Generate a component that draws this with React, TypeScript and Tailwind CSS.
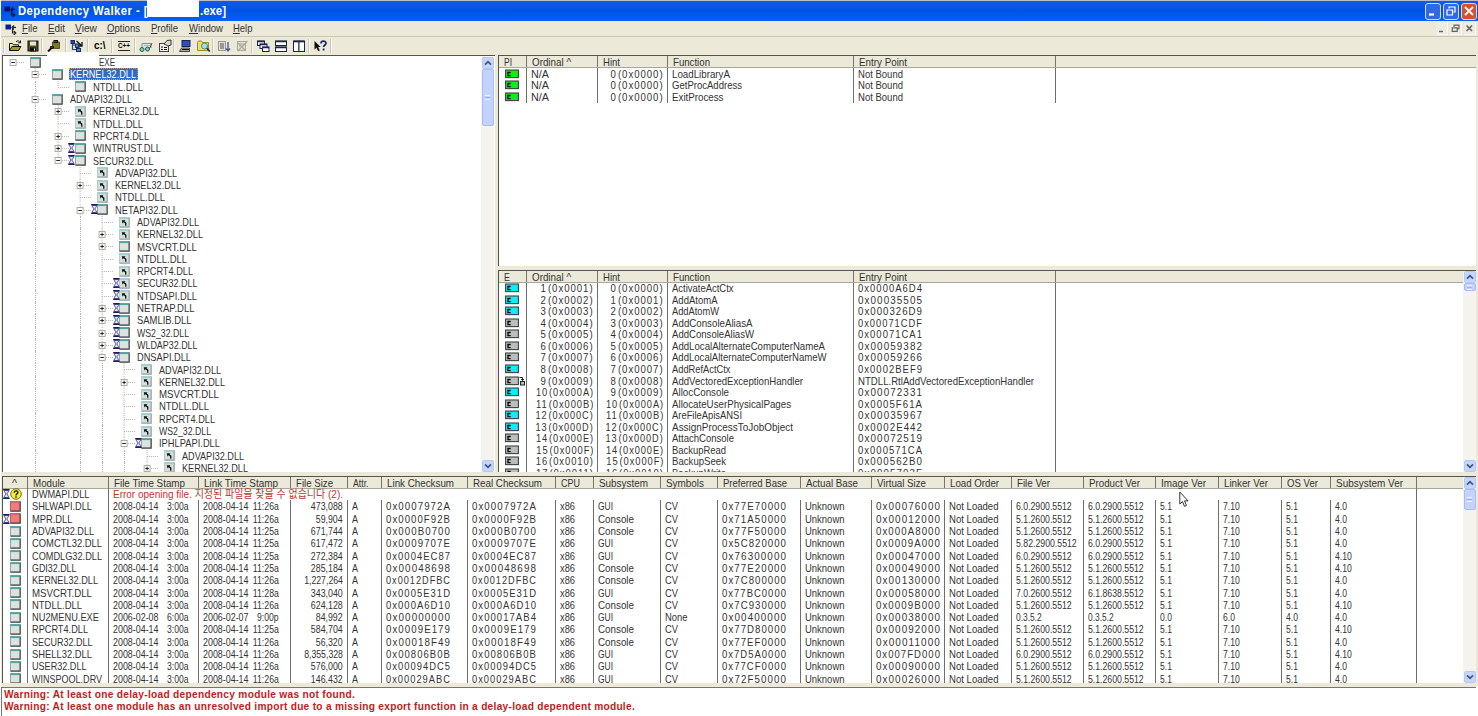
import { useLayoutEffect, useRef } from "react";
import type { ReactNode } from "react";

/* Text squeezed or stretched to a given width, like a bitmap UI font. */
function Fit({ w, children, right = false, className = "" }: { w?: number; children: ReactNode; right?: boolean; className?: string }) {
  const ref = useRef<HTMLSpanElement>(null);
  useLayoutEffect(() => {
    const el = ref.current;
    if (!el || !w) return;
    el.style.transform = "none";
    el.style.transform = `scaleX(${w / el.getBoundingClientRect().width})`;
  }, [w, children]);
  return (
    <span ref={ref} className={`inline-block shrink-0 whitespace-pre ${right ? "origin-right" : "origin-left"} ${className}`}>
      {children}
    </span>
  );
}

const NAME_W: Record<string, number> = {
  "KERNEL32.DLL": 66, "NTDLL.DLL": 50, "ADVAPI32.DLL": 62, "RPCRT4.DLL": 56, "WINTRUST.DLL": 68,
  "SECUR32.DLL": 60.5, "NETAPI32.DLL": 63, "MSVCRT.DLL": 60, "NTDSAPI.DLL": 60, "NETRAP.DLL": 57.5,
  "SAMLIB.DLL": 54.5, "WS2_32.DLL": 52, "WLDAP32.DLL": 60.5, "DNSAPI.DLL": 54, "IPHLPAPI.DLL": 61,
  "DWMAPI.DLL": 57.5, "SHLWAPI.DLL": 60, "MPR.DLL": 40.5, "COMCTL32.DLL": 70, "COMDLG32.DLL": 70,
  "GDI32.DLL": 44.5, "NU2MENU.EXE": 67, "SHELL32.DLL": 60, "USER32.DLL": 54.5, "WINSPOOL.DRV": 70,
};

function ModuleIcon({ kind }: { kind: "box" | "arrow" | "red" }) {
  return (
    <svg width="11" height="11" viewBox="0 0 11 11" className="shrink-0">
      <rect x="0.5" y="0.5" width="9.5" height="9.5" fill={kind === "red" ? "#f07c7c" : kind === "arrow" ? "#d3e0de" : "#dde1e0"} stroke={kind === "red" ? "#b06060" : kind === "arrow" ? "#bcc9c7" : "#9aa5a3"} />
      <path d="M0.5 1.200h9" stroke={kind === "red" ? "#d86b6b" : kind === "arrow" ? "#a3d2cc" : "#45aaa0"} strokeWidth="1.800" />
      <path d="M10.2 0.5v9.7H0.5" fill="none" stroke={kind === "arrow" ? "#9aa8a6" : "#4a4f4e"} strokeWidth="1.2" />
      {kind === "arrow" && <path d="M2.8 3.200h3.600L5.600 4.200 7.400 5.800v3H6.100V6.600L4.600 5.300 3.500 6.400z" fill="#111" />}
    </svg>
  );
}

function Hourglass() {
  return (
    <svg width="7" height="10" viewBox="0 0 7 10" className="shrink-0">
      <path d="M0.2 0.8h6.4M0.2 9.2h6.4" stroke="#1b1b66" strokeWidth="1.5" />
      <path d="M1.2 1.5c0 2 1.6 2.4 1.6 3.5s-1.6 1.500-1.600 3.500h4.400c0-2-1.600-2.400-1.600-3.500s1.600-1.500 1.600-3.500z" fill="#dfe2f2" stroke="#23236e" strokeWidth="0.8" />
    </svg>
  );
}

type TreeRow = [number, string, "box" | "arrow", boolean, string];
const tree: TreeRow[] = [
  [0, "-", "box", false, "EXE"],
  [1, "-", "box", false, "KERNEL32.DLL"],
  [2, "", "box", false, "NTDLL.DLL"],
  [1, "-", "box", false, "ADVAPI32.DLL"],
  [2, "+", "arrow", false, "KERNEL32.DLL"],
  [2, "", "arrow", false, "NTDLL.DLL"],
  [2, "+", "box", false, "RPCRT4.DLL"],
  [2, "+", "box", true, "WINTRUST.DLL"],
  [2, "-", "box", true, "SECUR32.DLL"],
  [3, "", "arrow", false, "ADVAPI32.DLL"],
  [3, "+", "arrow", false, "KERNEL32.DLL"],
  [3, "", "arrow", false, "NTDLL.DLL"],
  [3, "-", "box", true, "NETAPI32.DLL"],
  [4, "", "arrow", false, "ADVAPI32.DLL"],
  [4, "+", "arrow", false, "KERNEL32.DLL"],
  [4, "+", "box", false, "MSVCRT.DLL"],
  [4, "", "arrow", false, "NTDLL.DLL"],
  [4, "", "arrow", false, "RPCRT4.DLL"],
  [4, "", "arrow", true, "SECUR32.DLL"],
  [4, "", "arrow", true, "NTDSAPI.DLL"],
  [4, "+", "box", true, "NETRAP.DLL"],
  [4, "+", "box", true, "SAMLIB.DLL"],
  [4, "+", "box", true, "WS2_32.DLL"],
  [4, "+", "box", true, "WLDAP32.DLL"],
  [4, "-", "box", true, "DNSAPI.DLL"],
  [5, "", "arrow", false, "ADVAPI32.DLL"],
  [5, "+", "arrow", false, "KERNEL32.DLL"],
  [5, "", "arrow", false, "MSVCRT.DLL"],
  [5, "", "arrow", false, "NTDLL.DLL"],
  [5, "", "arrow", false, "RPCRT4.DLL"],
  [5, "", "arrow", false, "WS2_32.DLL"],
  [5, "-", "box", true, "IPHLPAPI.DLL"],
  [6, "", "arrow", false, "ADVAPI32.DLL"],
  [6, "+", "arrow", false, "KERNEL32.DLL"],
];

function continues(i: number, level: number) {
  for (let j = i + 1; j < tree.length; j++) {
    if (tree[j][0] < level) return false;
    if (tree[j][0] === level) return true;
  }
  return level !== 0 && level !== 2;
}

function TreeLine({ i }: { i: number }) {
  const [level, exp, icon, glass, name] = tree[i];
  return (
    <div className="flex h-[12.31px] items-center">
      {Array.from({ length: level }, (_, l) => (
        <div key={l} className="flex h-full w-[22.25px] shrink-0 justify-center">
          {continues(i, l) && <div className="h-full border-l border-dotted border-[#b4b4ac]" />}
        </div>
      ))}
      <svg width="22.25" height="12.31" viewBox="0 0 22.25 12.31" className="shrink-0">
        <g stroke="#b4b4ac" strokeDasharray="1 1">
          {level > 0 && <path d="M11.1 0V6.500" />}
          {continues(i, level) && <path d="M11.1 6.500V12.310" />}
          <path d="M11.1 6.500H22.250" />
        </g>
        {exp && (
          <>
            <rect x="8.1" y="3.5" width="6" height="6" fill="#fff" stroke="#a5a59c" strokeWidth="0.9" />
            <path d={exp === "+" ? "M9.300 6.500h3.600M11.100 4.700v3.600" : "M9.300 6.500h3.600"} stroke="#222" strokeWidth="1" />
          </>
        )}
      </svg>
      <div className="relative flex w-[22.25px] shrink-0 justify-center">
        {glass && <div className="absolute left-[-0.500px] top-0"><Hourglass /></div>}
        <ModuleIcon kind={icon} />
      </div>
      {i === 0 ? (
        <div className="pl-[52px]"><Fit w={16}>EXE</Fit></div>
      ) : i === 1 ? (
        <div className="flex h-[12px] w-[69px] items-center bg-[#316ac5] text-white outline outline-1 -outline-offset-1 outline-dotted outline-[#c9a060]">
          <Fit w={66} className="ml-[1.500px]">{name}</Fit>
        </div>
      ) : (
        <div className="pl-[1.500px]"><Fit w={NAME_W[name]}>{name}</Fit></div>
      )}
    </div>
  );
}

function Arrow({ up = false }: { up?: boolean }) {
  return (
    <div className="flex h-[12px] w-[12px] shrink-0 items-center justify-center rounded-[2px] border border-[#b4c8f6] bg-[#c6d5fc]">
      <svg width="8" height="6" viewBox="0 0 8 6">
        <path d={up ? "M1 4.700L4 1.700L7 4.700" : "M1 1.300L4 4.300L7 1.300"} fill="none" stroke="#40577f" strokeWidth="1.800" />
      </svg>
    </div>
  );
}

function ScrollBar({ thumb }: { thumb: string }) {
  return (
    <div className="flex w-[13px] shrink-0 flex-col items-center bg-[#f4f3ee]">
      <Arrow up />
      <div className={`flex w-[12px] flex-col items-center justify-center gap-px rounded-[2px] border border-[#a9bdf0] bg-[#c3d3fb] ${thumb}`}>
        <div className="h-px w-[5px] bg-[#eef4fe]" />
        <div className="h-px w-[5px] bg-[#9db4ea]" />
        <div className="h-px w-[5px] bg-[#eef4fe]" />
      </div>
      <div className="grow" />
      <Arrow />
    </div>
  );
}

function HeadCell({ width, label, w, center = false }: { width: string; label: string; w: number; center?: boolean }) {
  return (
    <div className={`flex h-full shrink-0 items-center border-r border-[#77756a] ${center ? "justify-center" : "pl-[5px]"} ${width}`}>
      <Fit w={w}>{label}</Fit>
    </div>
  );
}

const listCols: [string, string, number][] = [
  ["w-[71px]", "Ordinal ^", 39],
  ["w-[70px]", "Hint", 17],
  ["w-[186px]", "Function", 37],
  ["w-[202px]", "Entry Point", 48],
];

function ListHead({ first, w }: { first: string; w: number }) {
  return (
    <div className="flex h-[12px] shrink-0 border-b border-[#a9a798] bg-[#ebe9d9]">
      <HeadCell width="w-[28px]" label={first} w={w} />
      {listCols.map(([c, l, n]) => <HeadCell key={l} width={c} label={l} w={n} />)}
    </div>
  );
}

function CIcon({ color, forward = false }: { color: string; forward?: boolean }) {
  return (
    <svg width="21" height="10" viewBox="0 0 21 10" className="shrink-0">
      <rect x="0.6" y="1" width="12.800" height="7.600" fill={color} stroke="#3b4444" strokeWidth="1.100" />
      <path d="M5.700 3.500H3v3.200h2.700" fill="none" stroke="#000" strokeWidth="1.300" />
      {forward && (
        <g fill="none" stroke="#222">
          <path d="M14.500 1.500h3v2.800M16.200 3l1.300 1.600L19 3" />
          <rect x="15.500" y="5.500" width="4" height="3.500" fill="#9bd0c8" />
        </g>
      )}
    </svg>
  );
}

const LINE = "border-r border-[#6e6e6e]";

function ListRow({ color, forward, ordinal, hint, fn, fw, entry, ew, tracked }: {
  color: string; forward?: boolean; ordinal: string; hint: string; fn: string; fw: number; entry: string; ew: number; tracked: boolean;
}) {
  return (
    <div className="flex h-[11.540px] shrink-0 items-center">
      <div className={`flex h-full w-[28px] shrink-0 items-center pl-[5.500px] ${LINE}`}><CIcon color={color} forward={forward} /></div>
      <div className={`flex h-full w-[71px] shrink-0 items-center ${LINE} ${tracked ? "justify-end pr-[3px]" : "pl-[4px]"}`}>
        <Fit w={tracked ? ordinal.length * 5.1 + 2 : 18} right={tracked} className={tracked ? "tracking-[1.100px] [word-spacing:-3px]" : ""}>{ordinal}</Fit>
      </div>
      <div className={`flex h-full w-[70px] shrink-0 items-center justify-end pr-[3px] ${LINE}`}>
        <Fit w={hint.length * 5.1 + 2} right className="tracking-[1.100px] [word-spacing:-3px]">{hint}</Fit>
      </div>
      <div className={`flex h-full w-[186px] shrink-0 items-center pl-[4px] ${LINE}`}><Fit w={fw}>{fn}</Fit></div>
      <div className={`flex h-full w-[202px] shrink-0 items-center pl-[4px] ${LINE}`}>
        <Fit w={ew} className={entry.startsWith("0x") ? "tracking-[1.200px]" : ""}>{entry}</Fit>
      </div>
    </div>
  );
}

const imports: [string, number][] = [["LoadLibraryA", 58], ["GetProcAddress", 70], ["ExitProcess", 51.5]];

const exportsList: [string, number, string, string?][] = [
  ["ActivateActCtx", 61.5, "0x0000A6D4", "c"],
  ["AddAtomA", 45.5, "0x00035505", "c"],
  ["AddAtomW", 47, "0x000326D9", "c"],
  ["AddConsoleAliasA", 80.5, "0x00071CDF"],
  ["AddConsoleAliasW", 82, "0x00071CA1"],
  ["AddLocalAlternateComputerNameA", 153, "0x00059382"],
  ["AddLocalAlternateComputerNameW", 154.5, "0x00059266"],
  ["AddRefActCtx", 58.5, "0x0002BEF9", "c"],
  ["AddVectoredExceptionHandler", 131, "NTDLL.RtlAddVectoredExceptionHandler"],
  ["AllocConsole", 57, "0x00072331", "c"],
  ["AllocateUserPhysicalPages", 119, "0x0005F61A"],
  ["AreFileApisANSI", 70, "0x00035967", "c"],
  ["AssignProcessToJobObject", 121, "0x0002E442", "c"],
  ["AttachConsole", 62, "0x00072519"],
  ["BackupRead", 54, "0x000571CA"],
  ["BackupSeek", 54, "0x000562B0"],
  ["BackupWrite", 54, "0x0005703F"],
];

const hex4 = (n: number) => `(0x${n.toString(16).toUpperCase().padStart(4, "0")})`;

const moduleCols: [string, string, number][] = [
  ["w-[25px]", "^", 5],
  ["w-[81px]", "Module", 32],
  ["w-[90px]", "File Time Stamp", 71],
  ["w-[92px]", "Link Time Stamp", 74],
  ["w-[57px]", "File Size", 37],
  ["w-[34px]", "Attr.", 15.5],
  ["w-[86px]", "Link Checksum", 67],
  ["w-[88px]", "Real Checksum", 69],
  ["w-[38px]", "CPU", 19],
  ["w-[67px]", "Subsystem", 49],
  ["w-[57px]", "Symbols", 38],
  ["w-[83px]", "Preferred Base", 64],
  ["w-[71px]", "Actual Base", 52],
  ["w-[73px]", "Virtual Size", 49],
  ["w-[67px]", "Load Order", 49],
  ["w-[72px]", "File Ver", 33],
  ["w-[72px]", "Product Ver", 51],
  ["w-[63px]", "Image Ver", 45],
  ["w-[63px]", "Linker Ver", 44],
  ["w-[49px]", "OS Ver", 31],
  ["w-[86px]", "Subsystem Ver", 67],
];

/* name, icon, file date, file time, link date, link time, size, link sum, real sum, subsystem, symbols, base, virtual size, file ver, product ver, image, linker, os, subsystem ver */
const A = "2008-04-14";
const modules: string[][] = [
  ["SHLWAPI.DLL", "red", A, "3:00a", A, "11:26a", "473,088", "0x0007972A", "0x0007972A", "GUI", "CV", "0x77E70000", "0x00076000", "6.0.2900.5512", "6.0.2900.5512", "5.1", "7.10", "5.1", "4.0"],
  ["MPR.DLL", "redglass", A, "3:00a", A, "11:26a", "59,904", "0x0000F92B", "0x0000F92B", "Console", "CV", "0x71A50000", "0x00012000", "5.1.2600.5512", "5.1.2600.5512", "5.1", "7.10", "5.1", "4.0"],
  ["ADVAPI32.DLL", "", A, "3:00a", A, "11:25a", "671,744", "0x000B0700", "0x000B0700", "Console", "CV", "0x77F50000", "0x000A8000", "5.1.2600.5512", "5.1.2600.5512", "5.1", "7.10", "5.1", "4.0"],
  ["COMCTL32.DLL", "", A, "3:00a", A, "11:25a", "617,472", "0x0009707E", "0x0009707E", "GUI", "CV", "0x5C820000", "0x0009A000", "5.82.2900.5512", "6.0.2900.5512", "5.1", "7.10", "5.1", "4.0"],
  ["COMDLG32.DLL", "", A, "3:00a", A, "11:25a", "272,384", "0x0004EC87", "0x0004EC87", "GUI", "CV", "0x76300000", "0x00047000", "6.0.2900.5512", "6.0.2900.5512", "5.1", "7.10", "5.1", "4.10"],
  ["GDI32.DLL", "", A, "3:00a", A, "11:25a", "285,184", "0x00048698", "0x00048698", "Console", "CV", "0x77E20000", "0x00049000", "5.1.2600.5512", "5.1.2600.5512", "5.1", "7.10", "5.1", "4.10"],
  ["KERNEL32.DLL", "", A, "3:00a", A, "11:26a", "1,227,264", "0x0012DFBC", "0x0012DFBC", "Console", "CV", "0x7C800000", "0x00130000", "5.1.2600.5512", "5.1.2600.5512", "5.1", "7.10", "5.1", "4.0"],
  ["MSVCRT.DLL", "", A, "3:00a", A, "11:28a", "343,040", "0x0005E31D", "0x0005E31D", "GUI", "CV", "0x77BC0000", "0x00058000", "7.0.2600.5512", "6.1.8638.5512", "5.1", "7.10", "5.1", "4.0"],
  ["NTDLL.DLL", "", A, "3:00a", A, "11:26a", "624,128", "0x000A6D10", "0x000A6D10", "Console", "CV", "0x7C930000", "0x0009B000", "5.1.2600.5512", "5.1.2600.5512", "5.1", "7.10", "5.1", "4.10"],
  ["NU2MENU.EXE", "", "2006-02-08", "6:00a", "2006-02-07", "9:00p", "84,992", "0x00000000", "0x00017AB4", "GUI", "None", "0x00400000", "0x00038000", "0.3.5.2", "0.3.5.2", "0.0", "6.0", "4.0", "4.0"],
  ["RPCRT4.DLL", "", A, "3:00a", A, "11:25a", "584,704", "0x0009E179", "0x0009E179", "Console", "CV", "0x77D80000", "0x00092000", "5.1.2600.5512", "5.1.2600.5512", "5.1", "7.10", "5.1", "4.10"],
  ["SECUR32.DLL", "", A, "3:00a", A, "11:26a", "56,320", "0x00018F49", "0x00018F49", "Console", "CV", "0x77EF0000", "0x00011000", "5.1.2600.5512", "5.1.2600.5512", "5.1", "7.10", "5.1", "4.0"],
  ["SHELL32.DLL", "", A, "3:00a", A, "11:26a", "8,355,328", "0x00806B0B", "0x00806B0B", "GUI", "CV", "0x7D5A0000", "0x007FD000", "6.0.2900.5512", "6.0.2900.5512", "5.1", "7.10", "5.1", "4.10"],
  ["USER32.DLL", "", A, "3:00a", A, "11:26a", "576,000", "0x00094DC5", "0x00094DC5", "GUI", "CV", "0x77CF0000", "0x00090000", "5.1.2600.5512", "5.1.2600.5512", "5.1", "7.10", "5.1", "4.0"],
  ["WINSPOOL.DRV", "", A, "3:00a", A, "11:26a", "146,432", "0x00029ABC", "0x00029ABC", "GUI", "CV", "0x72F50000", "0x00026000", "5.1.2600.5512", "5.1.2600.5512", "5.1", "7.10", "5.1", "4.0"],
];

const WORD_W: Record<string, number> = { GUI: 15, Console: 36, CV: 13, None: 22.5, Unknown: 39.5, "Not Loaded": 49.5, x86: 15, A: 6 };

function textWidth(s: string) {
  if (WORD_W[s]) return WORD_W[s];
  if (s.startsWith("0x")) return 65;
  const digits = s.replace(/[.,]/g, "").length;
  return digits * 5 + (s.length - digits) * 1.9;
}

function DateTime({ d, t }: { d: string; t: string }) {
  return (
    <div className="flex w-[75.500px] shrink-0">
      <div className="w-[46px] shrink-0"><Fit w={45.5}>{d}</Fit></div>
      <div className="flex min-w-0 grow basis-0 justify-end"><Fit w={t.length > 5 ? 26 : 21.5} right>{t}</Fit></div>
    </div>
  );
}

function ModuleRow({ m }: { m: string[] }) {
  const rest = ["A", m[7], m[8], "x86", m[9], m[10], m[11], "Unknown", m[12], "Not Loaded", ...m.slice(13)];
  return (
    <div className="flex h-[12.300px] shrink-0">
      <div className={`flex w-[25px] shrink-0 items-center justify-end pr-[6px] ${LINE}`}>
        {m[1] === "redglass" && <Hourglass />}
        <ModuleIcon kind={m[1] ? "red" : "box"} />
      </div>
      <div className={`flex w-[81px] shrink-0 items-center pl-[4px] ${LINE}`}><Fit w={NAME_W[m[0]]}>{m[0]}</Fit></div>
      <div className={`flex w-[90px] shrink-0 items-center pl-[4px] ${LINE}`}><DateTime d={m[2]} t={m[3]} /></div>
      <div className={`flex w-[92px] shrink-0 items-center pl-[4px] ${LINE}`}><DateTime d={m[4]} t={m[5]} /></div>
      <div className={`flex w-[57px] shrink-0 items-center justify-end pr-[4px] ${LINE}`}><Fit w={textWidth(m[6])} right>{m[6]}</Fit></div>
      {rest.map((v, k) => (
        <div key={k} className={`flex shrink-0 items-center pl-[4px] ${LINE} ${moduleCols[k + 5][0]}`}>
          <Fit w={textWidth(v)} className={v.startsWith("0x") ? "tracking-[1.200px]" : ""}>{v}</Fit>
        </div>
      ))}
    </div>
  );
}

function AppIcon({ dark = false }: { dark?: boolean }) {
  return (
    <svg width="12" height="12" viewBox="0 0 12 12" className="shrink-0">
      <rect x="0.500" y="1.500" width="5.500" height="5" fill={dark ? "#0a1c96" : "#04107a"} />
      <g fill="none" stroke={dark ? "#222" : "#0a1440"} strokeWidth="1.200">
        <path d="M11 4.300H7.300M9 2.300L7 4.300l2 2M7.500 5v5h2M8.800 8l2 2-2 2" />
      </g>
    </svg>
  );
}

const menus: [string, string, number][] = [
  ["File", "w-[26px]", 15.5], ["Edit", "w-[27px]", 17], ["View", "w-[32px]", 22], ["Options", "w-[44px]", 33],
  ["Profile", "w-[38px]", 27], ["Window", "w-[44px]", 34], ["Help", "w-[30px]", 19.5],
];

function Tool({ width, children }: { width: string; children: ReactNode }) {
  return (
    <div className={`flex shrink-0 justify-center ${width}`}>
      <svg width="16" height="14" viewBox="0 0 16 14" fill="none" stroke="#111" strokeWidth="1">{children}</svg>
    </div>
  );
}

function Sep() {
  return <div className="h-[14px] w-[2px] shrink-0 border-l border-r border-l-[#cbc8b8] border-r-[#f8f7f0]" />;
}

function Toolbar() {
  return (
    <div className="flex h-[18px] shrink-0 items-center bg-[#ece9d8] pl-[2px]">
      <Sep />
      <Tool width="w-[20px]">
        <path d="M2.500 11.500v-7h3l1 1.300h5v2" fill="#f3ec8a" />
        <path d="M2.500 11.500l2.500-4h9l-2.500 4z" fill="#a59b28" />
        <path d="M9 2.800c1.500-1.500 3-1.300 4 .700M13.500 1.500v2.300h-2.300" />
      </Tool>
      <Tool width="w-[16px]">
        <rect x="3" y="2" width="10" height="10" fill="#4e4e20" />
        <rect x="5" y="2.500" width="6" height="4" fill="#e5e5dc" stroke="none" />
        <rect x="5.500" y="9" width="5" height="3" fill="#111" />
        <path d="M9.500 9.500v2" stroke="#fff" />
      </Tool>
      <Sep />
      <Tool width="w-[22px]">
        <path d="M6.500 3h7v6.500h-5L6.500 7.500z" fill="#7d7a26" stroke="#55521a" />
        <rect x="8" y="1.500" width="3.500" height="2" fill="#444" />
        <path d="M4.500 7.500h3v2h-3z" fill="#333" />
        <path d="M5 9.500l-3 3" strokeWidth="1.800" />
      </Tool>
      <Sep />
      <Tool width="w-[20px]">
        <path d="M3.500 2v8.500h4M3.500 6h4" stroke="#2a3f80" strokeWidth="1.200" />
        <rect x="2" y="1.500" width="3.500" height="3" fill="#2d4a94" stroke="#152a66" />
        <rect x="6.500" y="5" width="3.500" height="3.500" fill="#5b84b4" stroke="#152a66" />
        <rect x="7.500" y="9.500" width="4" height="3" fill="#5b84b4" stroke="#152a66" />
        <path d="M7.500 2l5 4.500M13 3v4H9.300" strokeWidth="1.300" />
      </Tool>
      <Sep />
      <div className="flex w-[22px] shrink-0 justify-center text-[10px] font-bold leading-none text-black"><Fit w={11.5} className="origin-center">c:\</Fit></div>
      <Sep />
      <div className="flex w-[21px] shrink-0 justify-center">
        <div className="flex h-[10px] w-[12px] items-center border-y border-[#222] text-[8px] font-bold leading-none text-black"><Fit w={12}>C++</Fit></div>
      </div>
      <Sep />
      <Tool width="w-[20px]">
        <path d="M4 9V4.500h9V9" stroke="#6e9a94" fill="#dce9e2" />
        <path d="M6 6.500h6" stroke="#9bb" />
        <circle cx="4" cy="10.500" r="2" fill="#8cc9b4" stroke="#285c50" />
        <circle cx="9.500" cy="10" r="2" fill="#8cc9b4" stroke="#285c50" />
        <path d="M11.500 9.500L14 4" stroke="#285c50" />
      </Tool>
      <Tool width="w-[17px]">
        <rect x="2.500" y="4.500" width="9" height="8" fill="#f3f2e8" stroke="#444" />
        <path d="M4 8h2M4 10.500h2M7 8.500h3M7 10.500h3" />
        <path d="M7 5l3-3.500 4-.500v5l-3 1z" fill="#d8d8cf" stroke="#333" />
      </Tool>
      <Sep />
      <Tool width="w-[20px]">
        <rect x="5" y="1.500" width="8" height="6" fill="#2f50b5" stroke="#1a235a" />
        <path d="M2.500 12.500l2-3.500h8v3.500z" fill="#aaa999" stroke="#444" />
        <path d="M5 10.500h7" />
      </Tool>
      <Tool width="w-[17px]">
        <path d="M1.500 11.500v-8l1-1.500h3l1 1.500h6v8z" fill="#f0df60" stroke="#9a8a2a" />
        <circle cx="8.500" cy="7" r="3" fill="#9fe0e8" stroke="#4a8a90" />
        <path d="M10.800 9.200l3 3.300" stroke="#303050" strokeWidth="1.800" />
      </Tool>
      <Sep />
      <Tool width="w-[19px]">
        <rect x="2.500" y="2.500" width="7" height="9" fill="#deddd2" stroke="#999" />
        <path d="M4 5h4M4 7h4M4 9h4" stroke="#555" />
        <path d="M12 3v9M10 9.500l2 2.500 2-2.500" stroke="#4a568c" strokeWidth="1.300" />
      </Tool>
      <Tool width="w-[18px]">
        <rect x="3.500" y="2.500" width="8" height="9" fill="#e4e2d6" stroke="#aaa99c" />
        <path d="M5 5h5M5 7h4M4 12l9.500-10M4 4l8 8" stroke="#aaa99c" strokeWidth="1.200" />
      </Tool>
      <Sep />
      <Tool width="w-[20px]">
        <g fill="#fff" stroke="#1b2350"><rect x="2.500" y="2" width="7" height="4.500" /><rect x="5" y="5" width="7" height="4.500" /><rect x="7.500" y="8" width="6.500" height="4.500" /></g>
        <path d="M2.500 2.500H9.500M5 5.500h7M7.500 8.500h6.500" stroke="#1b2350" strokeWidth="1.700" />
      </Tool>
      <Tool width="w-[16px]">
        <rect x="2.500" y="2" width="11" height="4.500" fill="#fff" stroke="#1b2350" /><rect x="2.500" y="8" width="11" height="4.500" fill="#fff" stroke="#1b2350" />
        <path d="M2.500 2.500h11M2.500 8.500h11" stroke="#1b2350" strokeWidth="1.700" />
      </Tool>
      <Tool width="w-[19px]">
        <rect x="2.500" y="2" width="5.500" height="10.500" fill="#fff" stroke="#1b2350" /><rect x="8" y="2" width="5.500" height="10.500" fill="#fff" stroke="#1b2350" />
        <path d="M2.500 2.500h11" stroke="#1b2350" strokeWidth="1.700" />
      </Tool>
      <Sep />
      <Tool width="w-[20px]">
        <path d="M2.500 2v8.500l2-1.800 1.700 3.600 1.600-.800L6.200 8h2.500z" fill="#111" stroke="none" />
        <path d="M9 4.500c0-3 5-3 5-.300 0 1.800-2.400 1.700-2.400 3.800M11.600 9.500v2" stroke="#1b2b70" strokeWidth="1.800" />
      </Tool>
      <Sep />
    </div>
  );
}

export default function App() {
  return (
    <div className="relative flex h-[716px] w-[1478px] select-none flex-col overflow-hidden bg-white pl-px font-['Liberation_Sans','Noto_Sans_CJK_KR',sans-serif] text-[11px] leading-[12px] text-[#333]">
      <div className="flex h-[21px] shrink-0 items-center border-t border-[#b9bcc4] bg-linear-to-b from-[#0a5cf0] via-[#0054e3] to-[#0360f5] pl-[3px] pr-[1px]">
        <AppIcon />
        <div className="-mt-px flex w-[184px] shrink-0 pl-[2px] text-[12px] font-bold text-white"><Fit w={130} className="tracking-[0.500px]">Dependency Walker - [</Fit></div>
        <Fit w={26} className="-mt-px text-[12px] font-bold text-white">.exe]</Fit>
        <div className="grow" />
        <div className="flex gap-[2px]">
          {["min", "restore", "close"].map((b) => (
            <div key={b} className={`flex h-[17px] w-[16px] items-center justify-center rounded-[3px] border border-[#cfdcf8] ${b === "close" ? "bg-[#d8502f]" : "bg-[#3468e0]"}`}>
              <svg width="12" height="12" viewBox="0 0 12 12" fill="none" stroke="#fff" strokeWidth="1.800">
                {b === "min" && <path d="M2 9.500h5" strokeWidth="2.200" />}
                {b === "restore" && <path d="M4 3.500V2h6v5H8.500M2 5h5.500v5H2z" strokeWidth="1.200" />}
                {b === "close" && <path d="M2 2l8 8M10 2l-8 8" />}
              </svg>
            </div>
          ))}
        </div>
      </div>

      <div className="flex h-[16px] shrink-0 items-center border-b border-[#c9c6b6] bg-[#ece9d8] pl-[4px] pr-[2px]">
        <AppIcon dark />
        <div className="-mt-px flex pl-[5px]">
          {menus.map(([m, c, w]) => (
            <div key={m} className={c}><Fit w={w}><span className="underline underline-offset-1">{m[0]}</span>{m.slice(1)}</Fit></div>
          ))}
        </div>
        <div className="grow" />
        <div className="flex gap-[2px]">
          {["min", "restore", "close"].map((b) => (
            <div key={b} className="flex h-[13px] w-[12px] items-center justify-center border-b border-r border-[#f8f7f2] bg-[#efede2]">
              <svg width="9" height="9" viewBox="0 0 9 9" fill="none" stroke="#66665e" strokeWidth="1.400">
                {b === "min" && <path d="M2 7.500h4" />}
                {b === "restore" && <path d="M3 3V1.200h5v3.500H6.500M1.200 3.800h5v3.500h-5z" strokeWidth="1.200" />}
                {b === "close" && <path d="M1.500 1.500l5.500 5.500M7 1.500L1.500 7" strokeWidth="1.700" />}
              </svg>
            </div>
          ))}
        </div>
      </div>

      <Toolbar />

      <div className="flex h-[417px] shrink-0 bg-[#ece9d8] pl-px pr-[2px]">
        <div className="flex w-[493px] shrink-0 overflow-hidden border-l border-t border-[#55534a] bg-white">
          <div className="-ml-[0.800px] flex grow flex-col">
            {tree.map((_, i) => <TreeLine key={i} i={i} />)}
          </div>
          <div className="flex pr-px pt-px"><ScrollBar thumb="h-[57px]" /></div>
        </div>
        <div className="w-[3px] shrink-0" />
        <div className="flex grow flex-col">
          <div className="flex h-[211px] shrink-0 flex-col overflow-hidden border-l border-t border-[#55534a] bg-white">
            <ListHead first="PI" w={8} />
            {imports.map(([fn, fw]) => (
              <ListRow key={fn} color="#12ec18" ordinal="N/A" hint="0 (0x0000)" fn={fn} fw={fw} entry="Not Bound" ew={45} tracked={false} />
            ))}
          </div>
          <div className="h-[4px] shrink-0" />
          <div className="flex h-[202px] shrink-0 overflow-hidden border-l border-t border-[#55534a] bg-white">
            <div className="flex h-[201px] grow flex-col overflow-hidden">
              <ListHead first="E" w={6} />
              <div className="-mt-[0.500px] flex flex-col">
                {exportsList.map(([fn, fw, entry, c], i) => (
                  <ListRow key={fn} color={c ? "#12ecf6" : "#bdbdbd"} forward={i === 8} ordinal={`${i + 1} ${hex4(i + 1)}`} hint={`${i} ${hex4(i)}`} fn={fn} fw={fw} entry={entry} ew={i === 8 ? 176 : 65} tracked />
                ))}
              </div>
            </div>
            <ScrollBar thumb="h-[8px]" />
          </div>
        </div>
      </div>

      <div className="h-[4px] shrink-0 bg-[#ece9d8]" />

      <div className="flex h-[207px] shrink-0 bg-[#ece9d8] pl-px pr-[2px]">
        <div className="flex grow overflow-hidden border-l border-t border-[#55534a] bg-white">
          <div className="flex grow flex-col overflow-hidden">
            <div className="flex h-[12px] shrink-0 border-b border-[#a9a798] bg-[#ebe9d9]">
              {moduleCols.map(([c, l, w]) => <HeadCell key={l} width={c} label={l} w={w} center={l === "^"} />)}
            </div>
            <div className="-mt-px flex h-[12.300px] shrink-0">
              <div className={`flex w-[25px] shrink-0 items-center justify-end pr-[5px] ${LINE}`}>
                <Hourglass />
                <svg width="12" height="12" viewBox="0 0 12 12">
                  <circle cx="6" cy="6" r="5.300" fill="#f6ee2c" stroke="#77701a" />
                  <path d="M4.200 4.700c0-2.400 3.700-2.400 3.700-.200C7.900 5.900 6 5.800 6 7.400M6 8.300v1.400" fill="none" stroke="#111" strokeWidth="1.300" />
                </svg>
              </div>
              <div className={`flex w-[81px] shrink-0 items-center pl-[4px] ${LINE}`}><Fit w={57.5}>DWMAPI.DLL</Fit></div>
              <div className={`flex w-[1308px] shrink-0 items-center pl-[4px] text-[#c43232] ${LINE}`}>
                <Fit w={230}>Error opening file. 지정된 파일을 찾을 수 없습니다 (2).</Fit>
              </div>
            </div>
            {modules.map((m) => <ModuleRow key={m[0]} m={m} />)}
          </div>
          <ScrollBar thumb="h-[21px]" />
        </div>
      </div>

      <div className="h-[4px] shrink-0 bg-[#ece9d8]" />
      <div className="mr-[2px] flex grow flex-col border-l border-t border-[#77756a] bg-white pl-[2px] font-bold text-[#c01c1c]">
        <div className="h-[12px]"><Fit w={351} className="tracking-[0.300px]">Warning: At least one delay-load dependency module was not found.</Fit></div>
        <div className="h-[12px]"><Fit w={631} className="tracking-[0.300px]">Warning: At least one module has an unresolved import due to a missing export function in a delay-load dependent module.</Fit></div>
      </div>

      <div className="absolute left-[147px] top-0 h-[17px] w-[52px] bg-white" />
      <div className="absolute left-[47px] top-[52px] h-[14px] w-[52px] bg-white" />
      <svg className="absolute left-[1179px] top-[491px]" width="10" height="17" viewBox="0 0 10 17">
        <path d="M0.800 1v12l2.700-2.400 2 4.800 2-.900-2-4.600h3.600z" fill="#fff" stroke="#333" />
      </svg>
    </div>
  );
}
